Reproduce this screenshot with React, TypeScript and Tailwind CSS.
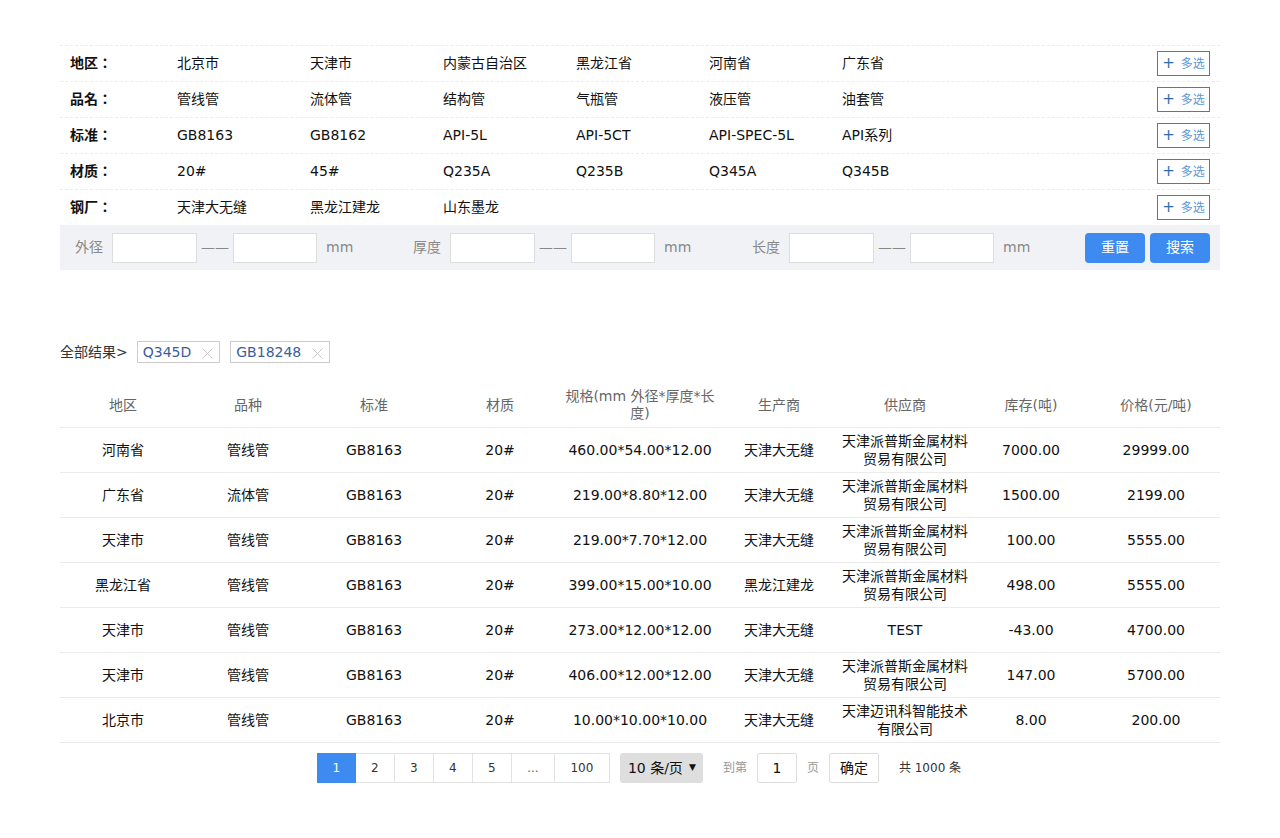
import React from "react";

const FONT = { fontFamily: '"DejaVu Sans", "Noto Sans CJK JP", sans-serif' };

const filters: { label: string; items: string[] }[] = [
  { label: "地区：", items: ["北京市", "天津市", "内蒙古自治区", "黑龙江省", "河南省", "广东省"] },
  { label: "品名：", items: ["管线管", "流体管", "结构管", "气瓶管", "液压管", "油套管"] },
  { label: "标准：", items: ["GB8163", "GB8162", "API-5L", "API-5CT", "API-SPEC-5L", "API系列"] },
  { label: "材质：", items: ["20#", "45#", "Q235A", "Q235B", "Q345A", "Q345B"] },
  { label: "钢厂：", items: ["天津大无缝", "黑龙江建龙", "山东墨龙"] },
];

const colWidths = ["w-[126px]", "w-[124px]", "w-[128px]", "w-[124px]", "w-[156px]", "w-[122px]", "w-[130px]", "w-[122px]", "w-[128px]"];
const headers = ["地区", "品种", "标准", "材质", "规格(mm 外径*厚度*长度)", "生产商", "供应商", "库存(吨)", "价格(元/吨)"];

const rows: string[][] = [
  ["河南省", "管线管", "GB8163", "20#", "460.00*54.00*12.00", "天津大无缝", "天津派普斯金属材料贸易有限公司", "7000.00", "29999.00"],
  ["广东省", "流体管", "GB8163", "20#", "219.00*8.80*12.00", "天津大无缝", "天津派普斯金属材料贸易有限公司", "1500.00", "2199.00"],
  ["天津市", "管线管", "GB8163", "20#", "219.00*7.70*12.00", "天津大无缝", "天津派普斯金属材料贸易有限公司", "100.00", "5555.00"],
  ["黑龙江省", "管线管", "GB8163", "20#", "399.00*15.00*10.00", "黑龙江建龙", "天津派普斯金属材料贸易有限公司", "498.00", "5555.00"],
  ["天津市", "管线管", "GB8163", "20#", "273.00*12.00*12.00", "天津大无缝", "TEST", "-43.00", "4700.00"],
  ["天津市", "管线管", "GB8163", "20#", "406.00*12.00*12.00", "天津大无缝", "天津派普斯金属材料贸易有限公司", "147.00", "5700.00"],
  ["北京市", "管线管", "GB8163", "20#", "10.00*10.00*10.00", "天津大无缝", "天津迈讯科智能技术有限公司", "8.00", "200.00"],
];

function RangeGroup({ label, width }: { label: string; width: string }) {
  return (
    <div className={`flex items-center shrink-0 ${width}`}>
      <span className="text-[14px] text-[#888] w-[37px] shrink-0">{label}</span>
      <input className="w-[85px] h-[30px] bg-white border border-[#ddd] outline-none shrink-0" />
      <span className="text-[14px] text-[#888] w-[36px] text-center shrink-0">——</span>
      <input className="w-[84px] h-[30px] bg-white border border-[#ddd] outline-none shrink-0" />
      <span className="text-[14px] text-[#888] ml-[9px] shrink-0">mm</span>
    </div>
  );
}

function XIcon() {
  return (
    <svg width="11" height="11" viewBox="0 0 11 11" className="ml-[11px] mt-[2px]">
      <path d="M0.5 0.5 L10.5 10.5 M10.5 0.5 L0.5 10.5" stroke="#c8c8c8" strokeWidth="1" />
    </svg>
  );
}

export default function App() {
  return (
    <div className="w-[1280px] min-h-[838px] bg-white text-[#111]" style={FONT}>
      <div className="mx-[60px] pt-[45px]">
        {/* Filters */}
        <div>
          {filters.map((f) => (
            <div key={f.label} className="flex items-center h-[36px] border-t border-dashed border-[#ececec]">
              <div className="w-[117px] pl-[10px] text-[14px] font-bold shrink-0">{f.label}</div>
              <div className="flex flex-1">
                {f.items.map((it) => (
                  <div key={it} className="w-[133px] text-[14px] shrink-0">{it}</div>
                ))}
              </div>
              <button className="mr-[10px] h-[25px] w-[53px] shrink-0 border border-[#3a82b8] flex items-center justify-center text-[12px] bg-white">
                <span className="text-[#2b6cb0] text-[15px] leading-none mr-[6px]">+</span>
                <span className="text-[#5b97d6]">多选</span>
              </button>
            </div>
          ))}
          <div className="flex items-center h-[45px] bg-[#f1f2f6] pl-[15px] pr-[10px]">
            <RangeGroup label="外径" width="w-[338px]" />
            <RangeGroup label="厚度" width="w-[339px]" />
            <RangeGroup label="长度" width="" />
            <div className="flex-1" />
            <button className="w-[60px] h-[30px] shrink-0 rounded-[4px] bg-[#3d8bf0] text-white text-[14px]">重置</button>
            <button className="w-[60px] h-[30px] shrink-0 rounded-[4px] bg-[#3d8bf0] text-white text-[14px] ml-[5px]">搜索</button>
          </div>
        </div>

        {/* Tags */}
        <div className="flex items-center mt-[71px] h-[22px]">
          <span className="text-[14px] text-[#333] mr-[9px]">全部结果&gt;</span>
          <span className="flex items-center h-[22px] border border-[#ccc] pl-[5px] pr-[6px] text-[14px] text-[#3b5d9a] mr-[10px]">
            Q345D
            <XIcon />
          </span>
          <span className="flex items-center h-[22px] border border-[#ccc] pl-[5px] pr-[6px] text-[14px] text-[#3b5d9a]">
            GB18248
            <XIcon />
          </span>
        </div>

        {/* Table */}
        <div className="mt-[20px]">
          <div className="flex h-[45px] items-center border-b border-[#ebebeb]">
            {headers.map((h, i) => (
              <div key={h} className={`${colWidths[i]} shrink-0 text-center text-[14px] leading-[17px] text-[#666] px-[2px]`}>
                {h}
              </div>
            ))}
          </div>
          {rows.map((r, ri) => (
            <div key={ri} className="flex h-[45px] items-center border-b border-[#ebebeb]">
              {r.map((c, i) => (
                <div key={i} className={`${colWidths[i]} shrink-0 text-center text-[14px] leading-[18px] text-[#111] px-[2px]`}>
                  {c}
                </div>
              ))}
            </div>
          ))}
        </div>

        {/* Pagination */}
        <div className="flex items-center justify-center mt-[10px] pr-[2px]">
          <div className="flex h-[30px] text-[12px]">
            <div className="w-[39px] flex items-center justify-center bg-[#3d8bf0] text-white border border-[#3d8bf0]">1</div>
            {["2", "3", "4", "5"].map((p) => (
              <div key={p} className="w-[39px] flex items-center justify-center border border-l-0 border-[#e2e2e2] text-[#333]">{p}</div>
            ))}
            <div className="w-[43px] flex items-center justify-center border border-l-0 border-[#e2e2e2] text-[#666]">...</div>
            <div className="w-[55px] flex items-center justify-center border border-l-0 border-[#e2e2e2] text-[#333]">100</div>
          </div>
          <div className="ml-[10px] w-[83px] h-[30px] rounded-[3px] bg-[#dedede] flex items-center pl-[8px] text-[14px]">
            10 条/页
            <span className="text-[9px] ml-[6px]">▼</span>
          </div>
          <span className="ml-[20px] text-[12px] text-[#999]">到第</span>
          <div className="ml-[10px] w-[40px] h-[30px] border border-[#ddd] rounded-[2px] flex items-center justify-center text-[14px]">1</div>
          <span className="ml-[10px] text-[12px] text-[#999]">页</span>
          <div className="ml-[10px] w-[50px] h-[30px] border border-[#ddd] rounded-[2px] flex items-center justify-center text-[14px]">确定</div>
          <span className="ml-[20px] text-[12px] text-[#333]">共 1000 条</span>
        </div>
      </div>
    </div>
  );
}
